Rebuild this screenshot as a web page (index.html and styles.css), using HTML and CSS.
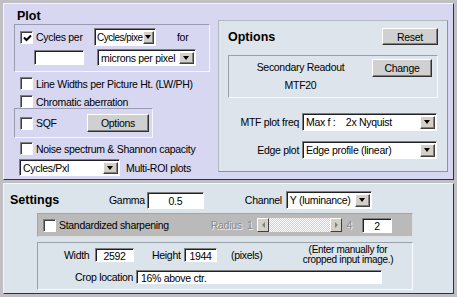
FILE: index.html
```html
<!DOCTYPE html>
<html lang="en">
<head>
    <meta charset="UTF-8">
    <title>MTF Plot Settings</title>
    <link rel="stylesheet" href="styles.css">
</head>
<body>
<div class="window">

    <!-- Plot panel -->
    <div class="panel plot">
        <div class="plot-left">
            <div class="title">Plot</div>

            <div class="group cycles">
                <div class="row">
                    <span class="check checked"><svg width="9" height="8" viewBox="0 0 9 8"><path d="M1 3.5 L3.5 6 L8 1.5" fill="none" stroke="#000" stroke-width="2"/></svg></span>
                    <span class="lbl cycles-lbl">Cycles per</span>
                    <span class="select sel-units"><span class="sel-text tight">Cycles/pixe</span><span class="drop"><i></i></span></span>
                    <span class="lbl for-lbl">for</span>
                </div>
                <div class="row row2">
                    <span class="field pixel-size"></span>
                    <span class="select sel-microns"><span class="sel-text">microns per pixel</span><span class="drop"><i></i></span></span>
                </div>
            </div>

            <div class="check-row lw"><span class="check"></span><span class="lbl">Line Widths per Picture Ht. (LW/PH)</span></div>
            <div class="check-row chroma"><span class="check"></span><span class="lbl">Chromatic aberration</span></div>

            <div class="group sqf">
                <span class="check"></span><span class="lbl">SQF</span>
                <span class="btn sqf-btn">Options</span>
            </div>

            <div class="check-row noise"><span class="check"></span><span class="lbl">Noise spectrum &amp; Shannon capacity</span></div>

            <div class="roi-row">
                <span class="select sel-pxl"><span class="sel-text">Cycles/Pxl</span><span class="drop"><i></i></span></span>
                <span class="lbl">Multi-ROI plots</span>
            </div>
        </div>

        <div class="options">
            <div class="options-head">
                <span class="title">Options</span>
                <span class="btn reset-btn">Reset</span>
            </div>
            <div class="readout">
                <div class="readout-text">
                    <div>Secondary Readout</div>
                    <div>MTF20</div>
                </div>
                <span class="btn change-btn">Change</span>
            </div>
            <div class="opt-row freq-row">
                <span class="lbl">MTF plot freq</span>
                <span class="select sel-wide"><span class="sel-text">Max f :&nbsp;&nbsp;&nbsp; 2x Nyquist</span><span class="drop"><i></i></span></span>
            </div>
            <div class="opt-row edge-row">
                <span class="lbl">Edge plot</span>
                <span class="select sel-wide"><span class="sel-text">Edge profile (linear)</span><span class="drop"><i></i></span></span>
            </div>
        </div>
    </div>

    <!-- Settings panel -->
    <div class="panel settings">
        <div class="settings-head">
            <span class="title settings-title">Settings</span>
            <span class="lbl">Gamma</span>
            <span class="field gamma">0.5</span>
            <span class="lbl channel-lbl">Channel</span>
            <span class="select sel-channel"><span class="sel-text">Y (luminance)</span><span class="drop"><i></i></span></span>
        </div>

        <div class="sharpen">
            <span class="check"></span>
            <span class="lbl">Standardized sharpening</span>
            <span class="radius">
                <span class="lbl disabled">Radius&nbsp; 1</span>
                <span class="slider"><span class="arrow left"><i></i></span><span class="track"></span><span class="arrow right"><i></i></span></span>
                <span class="lbl disabled">4</span>
                <span class="field radius-val">2</span>
            </span>
        </div>

        <div class="crop">
            <div class="crop-row">
                <span class="lbl w-lbl">Width</span>
                <span class="field w-val">2592</span>
                <span class="lbl h-lbl">Height</span>
                <span class="field h-val">1944</span>
                <span class="lbl px-lbl">(pixels)</span>
                <span class="note"><span>(Enter manually for</span><span>cropped input image.)</span></span>
            </div>
            <div class="crop-row loc-row">
                <span class="lbl loc-lbl">Crop location</span>
                <span class="field loc-val">16% above ctr.</span>
            </div>
        </div>
    </div>

</div>
</body>
</html>
```

FILE: styles.css
```css
* {
    box-sizing: border-box;
}

body {
    margin: 0;
    font-family: "Liberation Sans", Arial, sans-serif;
    font-size: 10.5px;
    letter-spacing: -0.3px;
    color: #000;
    background: #c0c0c4;
}

.window {
    width: 457px;
    height: 297px;
    padding: 3px;
    display: flex;
    flex-direction: column;
    gap: 3px;
    overflow: hidden;
}

.panel {
    border: 1px solid;
    border-color: #f4f4ff #303038 #303038 #f4f4ff;
}

.title {
    font-size: 12.5px;
    font-weight: bold;
    letter-spacing: 0;
}

.lbl {
    white-space: nowrap;
}

/* controls */
.check {
    width: 13px;
    height: 13px;
    flex: none;
    background: #fff;
    border: 1px solid;
    border-color: #808080 #fff #fff #808080;
    box-shadow: inset 1px 1px 0 #404040;
    display: flex;
    align-items: center;
    justify-content: center;
}

.check svg {
    margin: 1px 0 0 1px;
}

.field {
    background: #fff;
    height: 15px;
    border: 1px solid;
    border-color: #808080 #fff #fff #808080;
    box-shadow: inset 1px 1px 0 #202020;
    text-align: center;
    line-height: 13px;
    padding-top: 1px;
    flex: none;
}

.select {
    background: #fff;
    height: 18px;
    border: 1px solid;
    border-color: #808080 #fff #fff #808080;
    box-shadow: inset 1px 1px 0 #202020;
    display: flex;
    align-items: stretch;
    padding: 2px 1px 1px 2px;
    flex: none;
}

.sel-text {
    flex: 1;
    overflow: hidden;
    white-space: nowrap;
    line-height: 13px;
    padding-left: 1px;
}

.sel-text.tight {
    font-size: 10px;
    letter-spacing: -0.5px;
    padding-left: 0;
}

.drop {
    width: 15px;
    flex: none;
    background: #d4d0c8;
    border: 1px solid;
    border-color: #fff #404040 #404040 #fff;
    box-shadow: inset -1px -1px 0 #808080;
    display: flex;
    align-items: center;
    justify-content: center;
}

.sel-units .drop {
    width: 11px;
}

.drop i {
    width: 0;
    height: 0;
    border-left: 3.5px solid transparent;
    border-right: 3.5px solid transparent;
    border-top: 4px solid #000;
    margin: 0 1px 1px 0;
}

.btn {
    background: #d0d0d0;
    border: 1px solid;
    border-color: #fff #303030 #303030 #fff;
    box-shadow: inset -1px -1px 0 #808080;
    display: flex;
    align-items: center;
    justify-content: center;
    flex: none;
}

/* plot panel */
.plot {
    height: 177px;
    background: #d7d7f2;
    display: flex;
    gap: 8px;
    padding: 4px 5px 0 10px;
}

.plot-left {
    width: 196px;
    display: flex;
    flex-direction: column;
}

.plot-left .title {
    height: 16px;
    line-height: 16px;
    padding-left: 3px;
}

.group {
    border: 1px solid;
    border-color: #9a9ab4 #f6f6ff #f6f6ff #9a9ab4;
}

.cycles {
    height: 48px;
    padding: 3px 0 0 5px;
}

.row {
    display: flex;
    align-items: center;
    height: 18px;
}

.cycles-lbl {
    width: 61px;
    padding-left: 3px;
}

.sel-units {
    width: 62px;
}

.for-lbl {
    margin-left: 21px;
}

.row2 {
    margin-top: 3px;
    height: 17px;
}

.pixel-size {
    width: 50px;
    margin-left: 14px;
}

.sel-microns {
    width: 99px;
    height: 17px;
    margin-left: 13px;
}

.check-row {
    display: flex;
    align-items: center;
    gap: 3px;
    height: 13px;
    padding-left: 6px;
}

.lw {
    margin-top: 5px;
}

.chroma {
    margin-top: 5px;
}

.sqf {
    width: 139px;
    height: 30px;
    display: flex;
    align-items: center;
    gap: 3px;
    padding: 0 3px 0 5px;
}

.sqf-btn {
    width: 62px;
    height: 18px;
    margin-left: auto;
}

.noise {
    margin-top: 4px;
}

.roi-row {
    display: flex;
    align-items: center;
    gap: 6px;
    margin-top: 4px;
    padding-left: 5px;
}

.sel-pxl {
    width: 101px;
    height: 17px;
}

/* options box */
.options {
    width: 230px;
    height: 152px;
    margin-top: 12px;
    background: #dde4ec;
    border: 1px solid;
    border-color: #b0b8c0 #8c949c #8c949c #b0b8c0;
    padding: 7px 9px 0 9px;
}

.options-head {
    display: flex;
    align-items: center;
    justify-content: space-between;
    height: 17px;
}

.reset-btn {
    width: 56px;
    height: 17px;
}

.readout {
    margin-top: 10px;
    height: 43px;
    width: 210px;
    border: 1px solid;
    border-color: #98a0a8 #f8fbff #f8fbff #98a0a8;
    display: flex;
    padding-top: 2px;
}

.readout-text {
    width: 143px;
    text-align: center;
    line-height: 18px;
}

.change-btn {
    width: 60px;
    height: 18px;
    margin-top: 1px;
}

.opt-row {
    display: flex;
    align-items: center;
    justify-content: flex-end;
    gap: 3px;
    margin-right: 1px;
}

.freq-row {
    margin-top: 15px;
}

.edge-row {
    margin-top: 10px;
}

.sel-wide {
    width: 135px;
}

/* settings panel */
.settings {
    flex: 1;
    background: #dbe3eb;
    padding: 7px 0 0 6px;
}

.settings-head {
    display: flex;
    align-items: center;
    height: 18px;
}

.settings-title {
    width: 99px;
}

.gamma {
    width: 57px;
    height: 17px;
    line-height: 15px;
    margin-left: 2px;
}

.channel-lbl {
    margin-left: 41px;
    margin-right: 4px;
}

.sel-channel {
    width: 86px;
}

.sharpen {
    margin: 4px 0 0 27px;
    width: 376px;
    height: 24px;
    background: #bababa;
    border: 1px solid;
    border-color: #a4a4a4 #e0e0e0 #e0e0e0 #a4a4a4;
    display: flex;
    align-items: center;
    gap: 3px;
    padding: 0 20px 0 5px;
}

.radius {
    margin-left: auto;
    display: flex;
    align-items: center;
}

.disabled {
    color: #8a8a8a;
    text-shadow: 1px 1px 0 #eee;
}

.slider {
    display: flex;
    width: 85px;
    height: 14px;
    margin: 0 4px 0 5px;
}

.arrow {
    width: 12px;
    background: #d4d0c8;
    border: 1px solid;
    border-color: #fff #404040 #404040 #fff;
    display: flex;
    align-items: center;
    justify-content: center;
}

.arrow i {
    width: 0;
    height: 0;
    border-top: 3px solid transparent;
    border-bottom: 3px solid transparent;
}

.arrow.left i {
    border-right: 3px solid #808080;
}

.arrow.right i {
    border-left: 3px solid #808080;
}

.track {
    flex: 1;
    background-color: #e8e8e8;
    background-image: repeating-conic-gradient(#fff 0 25%, #d4d0c8 0 50%);
    background-size: 2px 2px;
}

.radius-val {
    width: 30px;
    margin-left: 10px;
}

.crop {
    margin: 5px 0 0 27px;
    width: 376px;
    height: 48px;
    border: 1px solid;
    border-color: #98a0a8 #f8fbff #f8fbff #98a0a8;
    padding-top: 5px;
}

.crop-row {
    display: flex;
    align-items: center;
    height: 14px;
}

.w-lbl {
    width: 31px;
    margin-left: 26px;
}

.w-val {
    width: 39px;
    height: 14px;
}

.h-lbl {
    width: 32px;
    margin-left: 18px;
}

.h-val {
    width: 33px;
    height: 14px;
}

.px-lbl {
    width: 31px;
    margin-left: 14px;
}

.note {
    width: 92px;
    margin-left: 40px;
    display: flex;
    flex-direction: column;
    align-items: center;
    font-size: 10px;
    line-height: 10px;
    white-space: nowrap;
}

.loc-row {
    margin-top: 8px;
    gap: 3px;
}

.loc-lbl {
    width: 95px;
    text-align: right;
}

.loc-val {
    width: 246px;
    height: 14px;
    text-align: left;
    padding-left: 4px;
}
```
